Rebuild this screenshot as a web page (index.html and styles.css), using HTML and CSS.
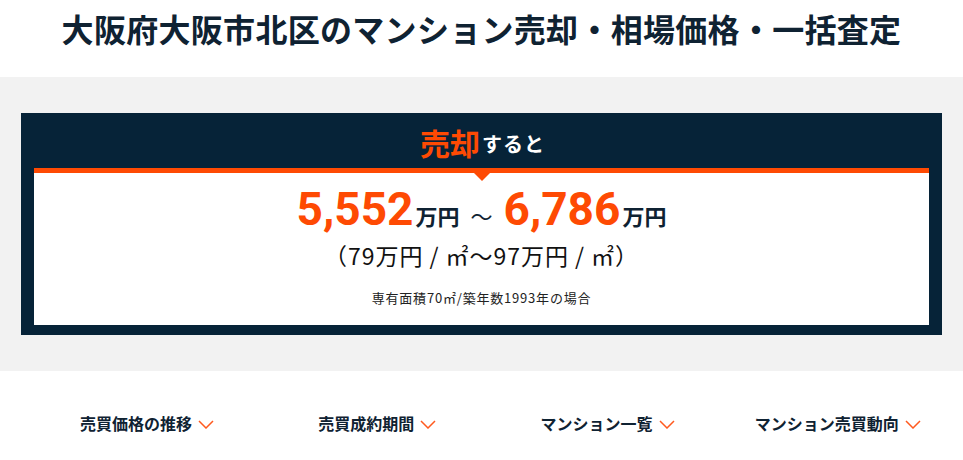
FILE: index.html
```html
<!DOCTYPE html>
<html lang="ja">
<head>
    <meta charset="UTF-8">
    <meta name="viewport" content="width=device-width, initial-scale=1.0">
    <title>大阪府大阪市北区のマンション売却・相場価格・一括査定</title>
    <link rel="stylesheet" href="styles.css">
</head>
<body>
<header class="page-header">
    <h1>大阪府大阪市北区のマンション売却・相場価格・一括査定</h1>
</header>

<section class="estimate">
    <div class="estimate-box">
        <div class="estimate-head">
            <span class="accent">売却</span><span class="head-rest">すると</span>
        </div>
        <div class="estimate-body">
            <div class="price-range">
                <span class="price">5,552</span><span class="unit">万円</span>
                <span class="tilde">～</span>
                <span class="price">6,786</span><span class="unit">万円</span>
            </div>
            <div class="per-area">（79万円<span class="sep">/</span>㎡～97万円<span class="sep">/</span>㎡）</div>
            <div class="condition">専有面積70㎡/築年数1993年の場合</div>
        </div>
    </div>
</section>

<nav class="section-nav">
    <a class="nav-item" href="#trend"><span class="nav-label">売買価格の推移<svg class="chevron" viewBox="0 0 16 9"><polyline points="1,1 8,8 15,1"/></svg></span></a>
    <a class="nav-item" href="#period"><span class="nav-label">売買成約期間<svg class="chevron" viewBox="0 0 16 9"><polyline points="1,1 8,8 15,1"/></svg></span></a>
    <a class="nav-item" href="#list"><span class="nav-label">マンション一覧<svg class="chevron" viewBox="0 0 16 9"><polyline points="1,1 8,8 15,1"/></svg></span></a>
    <a class="nav-item" href="#market"><span class="nav-label">マンション売買動向<svg class="chevron" viewBox="0 0 16 9"><polyline points="1,1 8,8 15,1"/></svg></span></a>
</nav>
</body>
</html>
```

FILE: styles.css
```css
body {
    margin: 0;
    font-family: "Noto Sans CJK JP", "Noto Sans", sans-serif;
    color: #0f2232;
    background-color: #fff;
}

.page-header {
    height: 77px;
    box-sizing: border-box;
    padding-top: 4px;
}

h1 {
    margin: 0;
    font-size: 32px;
    line-height: 48px;
    font-weight: 700;
    text-align: center;
    letter-spacing: 0.3px;
}

.estimate {
    background-color: #f2f2f2;
    padding: 36px 21px;
}

.estimate-box {
    background-color: #062338;
    padding: 0 13px 10px;
}

.estimate-head {
    height: 55px;
    display: flex;
    justify-content: center;
    align-items: center;
    padding-top: 2px;
    box-sizing: border-box;
}

.accent {
    color: #fe4a03;
    font-size: 30px;
    font-weight: 700;
    margin-left: 2px;
}

.head-rest {
    color: #fff;
    font-size: 20px;
    font-weight: 700;
    margin-top: 4px;
    margin-left: 2px;
    letter-spacing: 1px;
}

.estimate-body {
    position: relative;
    background-color: #fff;
    border-top: 5px solid #fe4a03;
    padding: 12px 0 17px;
    text-align: center;
}

.estimate-body::before {
    content: "";
    position: absolute;
    top: 0;
    left: 50%;
    margin-left: -8px;
    border-left: 8px solid transparent;
    border-right: 8px solid transparent;
    border-top: 8px solid #fe4a03;
}

.price-range {
    height: 48px;
    display: flex;
    justify-content: center;
    align-items: baseline;
    line-height: 48px;
}

.price {
    font-family: Roboto, "Liberation Sans", sans-serif;
    font-size: 46px;
    font-weight: 700;
    color: #fe4a03;
}

.unit {
    font-size: 22px;
    font-weight: 700;
    color: #0f2232;
    margin-left: 2px;
}

.tilde {
    font-size: 22px;
    margin: 0 11px;
    color: #0f2232;
}

.per-area {
    margin-top: 5px;
    font-size: 23px;
    line-height: 34px;
    letter-spacing: 1px;
    color: #111;
}

.sep {
    padding: 0 6px;
}

.condition {
    margin-top: 16px;
    font-size: 13px;
    line-height: 20px;
    letter-spacing: 0.8px;
    color: #222;
}

.section-nav {
    display: grid;
    grid-template-columns: repeat(4, 1fr);
    padding: 40px 21px 0;
}

.nav-item {
    text-align: center;
    text-decoration: none;
    color: #0f2232;
    font-size: 16px;
    font-weight: 700;
    line-height: 24px;
}

.nav-label {
    position: relative;
}

.chevron {
    position: absolute;
    right: -22px;
    top: 9px;
    width: 16px;
    height: 9px;
    fill: none;
    stroke: #ff5a1f;
    stroke-width: 1.5;
}
```
